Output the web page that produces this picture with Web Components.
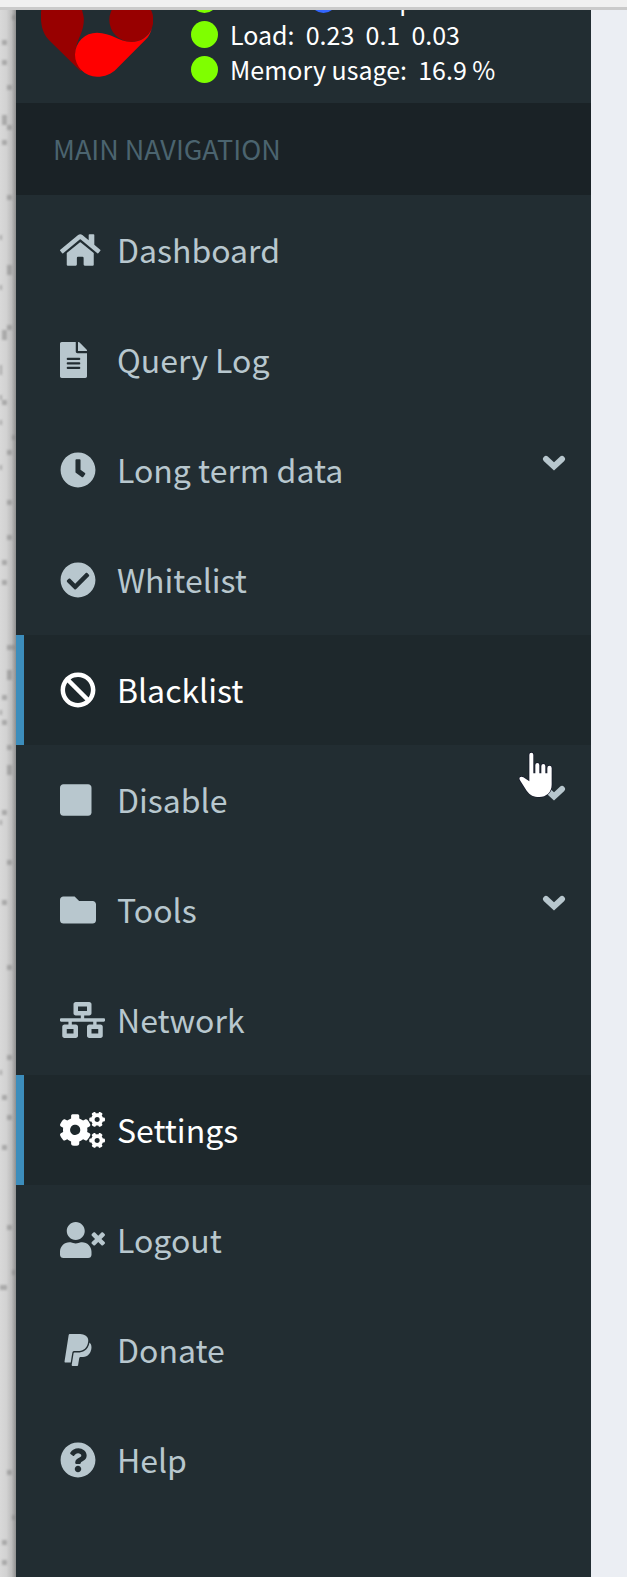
<!DOCTYPE html>
<html lang="en">
<head>
<meta charset="utf-8">
<meta name="viewport" content="width=device-width">
<title>Pi-hole navigation</title>
<style>
  html, body { margin: 0; background: #ebeef3; }
  body { font-family: "Noto Sans CJK SC", "Noto Sans CJK JP", sans-serif; }
</style>
</head>
<body>
<app-page>
  <status-panel slot="sidebar"></status-panel>
  <nav-menu slot="sidebar" heading="MAIN NAVIGATION">
    <nav-item icon="home">Dashboard</nav-item>
    <nav-item icon="file">Query Log</nav-item>
    <nav-item icon="clock" expandable>Long term data</nav-item>
    <nav-item icon="check">Whitelist</nav-item>
    <nav-item icon="ban" active>Blacklist</nav-item>
    <nav-item icon="stop" expandable>Disable<hand-pointer slot="overlay"></hand-pointer></nav-item>
    <nav-item icon="folder" expandable>Tools</nav-item>
    <nav-item icon="network">Network</nav-item>
    <nav-item icon="cogs" active>Settings</nav-item>
    <nav-item icon="logout">Logout</nav-item>
    <nav-item icon="paypal">Donate</nav-item>
    <nav-item icon="help">Help</nav-item>
  </nav-menu>
</app-page>

<script>
const define = (name, html, setup) => {
  const template = document.createElement('template');
  template.innerHTML = html;
  customElements.define(name, class extends HTMLElement {
    constructor() {
      super();
      this.attachShadow({ mode: 'open' }).append(template.content.cloneNode(true));
    }
    connectedCallback() { if (setup) setup(this, this.shadowRoot); }
  });
};

// [viewBox, path] for each menu icon; 512 units are 36px.
const ICONS = {
  home: ['0 0 576 512', 'M280.37 148.26L96 300.11V464a16 16 0 0 0 16 16l112.06-.29a16 16 0 0 0 15.92-16V368a16 16 0 0 1 16-16h64a16 16 0 0 1 16 16v95.64a16 16 0 0 0 16 16.05L464 480a16 16 0 0 0 16-16V300L295.67 148.26a12.19 12.19 0 0 0-15.3 0zM571.6 251.47L488 182.56V44.05a12 12 0 0 0-12-12h-56a12 12 0 0 0-12 12v72.61L318.47 43a48 48 0 0 0-61 0L4.34 251.47a12 12 0 0 0-1.6 16.9l25.5 31A12 12 0 0 0 45.15 301l235.22-193.74a12.19 12.19 0 0 1 15.3 0L530.9 301a12 12 0 0 0 16.9-1.6l25.5-31a12 12 0 0 0-1.7-16.93z'],
  file: ['0 0 384 512', 'M224 136V0H24C10.7 0 0 10.7 0 24v464c0 13.3 10.7 24 24 24h336c13.3 0 24-10.7 24-24V160H248c-13.2 0-24-10.8-24-24zm64 236c0 6.6-5.4 12-12 12H108c-6.6 0-12-5.4-12-12v-8c0-6.6 5.4-12 12-12h168c6.6 0 12 5.4 12 12v8zm0-64c0 6.6-5.4 12-12 12H108c-6.6 0-12-5.4-12-12v-8c0-6.6 5.4-12 12-12h168c6.6 0 12 5.4 12 12v8zm0-72v8c0 6.6-5.4 12-12 12H108c-6.6 0-12-5.4-12-12v-8c0-6.6 5.4-12 12-12h168c6.6 0 12 5.4 12 12zm96-114.1v6.1H256V0h6.1c6.4 0 12.5 2.5 17 7l97.9 98c4.5 4.5 7 10.6 7 16.9z'],
  clock: ['0 0 512 512', 'M256 8C119 8 8 119 8 256s111 248 248 248 248-111 248-248S393 8 256 8zm57.1 350.1L224.9 294c-3.1-2.3-4.9-5.9-4.9-9.7V116c0-6.6 5.4-12 12-12h48c6.6 0 12 5.4 12 12v137.7l63.5 46.2c5.4 3.9 6.5 11.4 2.6 16.8l-28.2 38.8c-3.9 5.3-11.4 6.5-16.8 2.6z'],
  check: ['0 0 512 512', 'M504 256c0 136.967-111.033 248-248 248S8 392.967 8 256 119.033 8 256 8s248 111.033 248 248zM227.314 387.314l184-184c6.248-6.248 6.248-16.379 0-22.627l-22.627-22.627c-6.248-6.249-16.379-6.249-22.628 0L216 308.118l-70.059-70.059c-6.248-6.248-16.379-6.248-22.628 0l-22.627 22.627c-6.248 6.248-6.248 16.379 0 22.627l104 104c6.249 6.249 16.379 6.249 22.628.001z'],
  ban: ['0 0 512 512', 'M256 8C119.034 8 8 119.033 8 256s111.034 248 248 248 248-111.034 248-248S392.967 8 256 8zm130.108 117.892c65.448 65.448 70 165.481 20.677 235.637L150.47 105.216c70.204-49.356 170.226-44.735 235.638 20.676zM125.892 386.108c-65.448-65.448-70-165.481-20.677-235.637L361.53 406.784c-70.203 49.356-170.226 44.736-235.638-20.676z'],
  stop: ['0 0 448 512', 'M400 32H48C21.5 32 0 53.5 0 80v352c0 26.5 21.5 48 48 48h352c26.5 0 48-21.5 48-48V80c0-26.5-21.5-48-48-48z'],
  folder: ['0 0 512 512', 'M464 128H272l-64-64H48C21.49 64 0 85.49 0 112v288c0 26.51 21.49 48 48 48h416c26.51 0 48-21.49 48-48V176c0-26.51-21.49-48-48-48z'],
  network: ['0 0 640 512', 'M640 264v-16c0-8.84-7.16-16-16-16H344v-40h72c17.67 0 32-14.33 32-32V32c0-17.67-14.33-32-32-32H224c-17.67 0-32 14.33-32 32v128c0 17.67 14.33 32 32 32h72v40H16c-8.84 0-16 7.16-16 16v16c0 8.84 7.16 16 16 16h104v40H64c-17.67 0-32 14.33-32 32v128c0 17.67 14.33 32 32 32h160c17.67 0 32-14.33 32-32V352c0-17.67-14.33-32-32-32h-56v-40h304v40h-56c-17.67 0-32 14.33-32 32v128c0 17.67 14.33 32 32 32h160c17.67 0 32-14.33 32-32V352c0-17.67-14.33-32-32-32h-56v-40h104c8.84 0 16-7.16 16-16zM256 128V64h128v64H256zm-64 320H96v-64h96v64zm352 0h-96v-64h96v64z'],
  cogs: ['0 0 640 512', 'M512.1 191l-8.2 14.3c-3 5.3-9.4 7.5-15.1 5.4-11.8-4.4-22.6-10.7-32.1-18.6-4.6-3.8-5.8-10.5-2.8-15.7l8.2-14.3c-6.9-8-12.3-17.3-15.9-27.4h-16.5c-6 0-11.2-4.3-12.2-10.3-2-12-2.1-24.6 0-37.1 1-6 6.2-10.4 12.2-10.4h16.5c3.6-10.1 9-19.4 15.9-27.4l-8.2-14.3c-3-5.2-1.9-11.9 2.8-15.7 9.5-7.9 20.4-14.2 32.1-18.6 5.7-2.1 12.1.1 15.1 5.4l8.2 14.3c10.5-1.9 21.2-1.9 31.7 0L552 6.3c3-5.3 9.4-7.5 15.1-5.4 11.8 4.4 22.6 10.7 32.1 18.6 4.6 3.8 5.8 10.5 2.8 15.7l-8.2 14.3c6.9 8 12.3 17.3 15.9 27.4h16.5c6 0 11.2 4.3 12.2 10.3 2 12 2.1 24.6 0 37.1-1 6-6.2 10.4-12.2 10.4h-16.5c-3.6 10.1-9 19.4-15.9 27.4l8.2 14.3c3 5.2 1.9 11.9-2.8 15.7-9.5 7.9-20.4 14.2-32.1 18.6-5.7 2.1-12.1-.1-15.1-5.4l-8.2-14.3c-10.4 1.9-21.2 1.9-31.7 0zm-10.5-58.8c38.5 29.6 82.4-14.3 52.8-52.8-38.5-29.7-82.4 14.3-52.8 52.8zM386.3 286.1l33.7 16.8c10.1 5.8 14.5 18.1 10.5 29.1-8.9 24.2-26.4 46.4-42.6 65.8-7.4 8.9-20.2 11.1-30.3 5.3l-29.1-16.8c-16 13.7-34.6 24.6-54.9 31.7v33.6c0 11.6-8.3 21.6-19.7 23.6-24.6 4.2-50.4 4.4-75.9 0-11.5-2-20-11.9-20-23.6V418c-20.3-7.2-38.9-18-54.9-31.7L74 403c-10 5.8-22.9 3.6-30.3-5.3-16.2-19.4-33.3-41.6-42.2-65.7-4-10.9.4-23.2 10.5-29.1l33.3-16.8c-3.9-20.9-3.9-42.4 0-63.4L12 205.8c-10.1-5.8-14.6-18.1-10.5-29 8.9-24.2 26-46.4 42.2-65.8 7.4-8.9 20.2-11.1 30.3-5.3l29.1 16.8c16-13.7 34.6-24.6 54.9-31.7V57.1c0-11.5 8.2-21.5 19.6-23.5 24.6-4.2 50.5-4.4 76-.1 11.5 2 20 11.9 20 23.6v33.6c20.3 7.2 38.9 18 54.9 31.7l29.1-16.8c10-5.8 22.9-3.6 30.3 5.3 16.2 19.4 33.2 41.6 42.1 65.8 4 10.9.1 23.2-10 29.1l-33.7 16.8c3.9 21 3.9 42.5 0 63.5zm-117.6 21.1c59.2-77-28.7-164.9-105.7-105.7-59.2 77 28.7 164.9 105.7 105.7zm243.4 182.7l-8.2 14.3c-3 5.3-9.4 7.5-15.1 5.4-11.8-4.4-22.6-10.7-32.1-18.6-4.6-3.8-5.8-10.5-2.8-15.7l8.2-14.3c-6.9-8-12.3-17.3-15.9-27.4h-16.5c-6 0-11.2-4.3-12.2-10.3-2-12-2.1-24.6 0-37.1 1-6 6.2-10.4 12.2-10.4h16.5c3.6-10.1 9-19.4 15.9-27.4l-8.2-14.3c-3-5.2-1.9-11.9 2.8-15.7 9.5-7.9 20.4-14.2 32.1-18.6 5.7-2.1 12.1.1 15.1 5.4l8.2 14.3c10.5-1.9 21.2-1.9 31.7 0l8.2-14.3c3-5.3 9.4-7.5 15.1-5.4 11.8 4.4 22.6 10.7 32.1 18.6 4.6 3.8 5.8 10.5 2.8 15.7l-8.2 14.3c6.9 8 12.3 17.3 15.9 27.4h16.5c6 0 11.2 4.3 12.2 10.3 2 12 2.1 24.6 0 37.1-1 6-6.2 10.4-12.2 10.4h-16.5c-3.6 10.1-9 19.4-15.9 27.4l8.2 14.3c3 5.2 1.9 11.9-2.8 15.7-9.5 7.9-20.4 14.2-32.1 18.6-5.7 2.1-12.1-.1-15.1-5.4l-8.2-14.3c-10.4 1.9-21.2 1.9-31.7 0zM501.6 431c38.5 29.6 82.4-14.3 52.8-52.8-38.5-29.6-82.4 14.3-52.8 52.8z'],
  logout: ['0 0 640 512', 'M589.6 240l45.6-45.6c6.3-6.3 6.3-16.5 0-22.8l-22.8-22.8c-6.3-6.3-16.5-6.3-22.8 0L544 194.4l-45.6-45.6c-6.3-6.3-16.5-6.3-22.8 0l-22.8 22.8c-6.3 6.3-6.3 16.5 0 22.8l45.6 45.6-45.6 45.6c-6.3 6.3-6.3 16.5 0 22.8l22.8 22.8c6.3 6.3 16.5 6.3 22.8 0l45.6-45.6 45.6 45.6c6.3 6.3 16.5 6.3 22.8 0l22.8-22.8c6.3-6.3 6.3-16.5 0-22.8L589.6 240zM224 256c70.7 0 128-57.3 128-128S294.7 0 224 0 96 57.3 96 128s57.3 128 128 128zm89.6 32h-16.7c-22.2 10.2-46.9 16-72.9 16s-50.6-5.8-72.9-16h-16.7C60.2 288 0 348.2 0 422.4V464c0 26.5 21.5 48 48 48h352c26.5 0 48-21.5 48-48v-41.6c0-74.2-60.2-134.4-134.4-134.4z'],
  paypal: ['-64 0 512 512', 'M111.4 295.9c-3.5 19.2-17.4 108.7-21.5 134-.3 1.8-1 2.5-3 2.5H12.3c-7.6 0-13.1-6.6-12.1-13.9L58.8 46.6c1.5-9.6 10.1-16.9 20-16.9 152.3 0 165.1-3.7 204 11.4 60.1 23.3 65.6 79.5 44 140.3-21.5 62.6-72.5 89.5-140.1 90.3-43.4.7-69.5-7-75.3 24.2zM357.1 152c-1.8-1.3-2.5-1.8-3 1.3-2 11.4-5.1 22.5-8.8 33.6-39.9 113.8-150.5 103.9-204.5 103.9-6.1 0-10.1 3.3-10.9 9.4-22.6 140.4-27.1 169.7-27.1 169.7-1 7.1 3.5 12.9 10.6 12.9h63.5c8.6 0 15.7-6.3 17.4-14.9.7-5.4-1.1 6.1 14.4-91.3 4.6-22 14.3-19.7 29.3-19.7 71 0 126.4-28.8 142.9-112.3 6.5-34.8 4.6-71.4-23.8-92.6z'],
  help: ['0 0 512 512', 'M504 256c0 136.997-111.043 248-248 248S8 392.997 8 256C8 119.083 119.043 8 256 8s248 111.083 248 248zM262.655 90c-54.497 0-89.255 22.957-116.549 63.758-3.536 5.286-2.353 12.415 2.715 16.258l34.699 26.31c5.205 3.947 12.621 3.008 16.665-2.122 17.864-22.658 30.113-35.797 57.303-35.797 20.429 0 45.698 13.148 45.698 32.958 0 14.976-12.363 22.667-32.534 33.976C247.128 238.528 216 254.941 216 296v4c0 6.627 5.373 12 12 12h56c6.627 0 12-5.373 12-12v-1.333c0-28.462 83.186-29.647 83.186-106.667 0-58.002-60.165-102-116.531-102zM256 338c-25.365 0-46 20.635-46 46 0 25.364 20.635 46 46 46s46-20.636 46-46c0-25.364-20.635-46-46-46z']
};

define('hand-pointer', `
  <style>
    :host { display: block; width: 37px; height: 50px; }
    svg { display: block; }
  </style>
  <svg width="37" height="50" viewBox="0 0 111 150" aria-hidden="true">
    <path fill="#fff" stroke="#15182a" stroke-width="4" paint-order="stroke" stroke-linejoin="round"
      d="M37 94V14a6 6 0 0 1 12 0V70H55V45a6 6 0 0 1 12 0V70H73V48a6 6 0 0 1 12 0V70H91V54a6 6 0 0 1 13 0V104C104 126 88 141 67 141C50 141 39 136 29 122L9 91C4 83 11 77 19 82Z"/>
  </svg>`);

// Rough paper edge to the left of the sidebar: [x, y, width, height] of each fleck.
const FLECKS = [[12,15],[2,40],[2,60],[7,85],[2,115,5,10],[7,125],[2,140],[7,195],[-3,235],[7,265,5,10],[-3,285],[7,325],[2,330,5,10],[-3,365,5,10],[-3,395],[2,400],[-3,420],[12,435],[7,450],[-3,465],[7,500],[7,535],[2,560],[2,580],[7,645,9],[7,670,5,10],[2,695],[-3,710],[2,720],[7,745],[7,765,5,10],[2,810],[-3,820],[7,860],[2,900],[7,965],[7,1055],[-3,1070],[2,1095],[7,1115],[2,1145],[7,1225],[12,1270],[-3,1285,10],[7,1470],[12,1515],[2,1540],[2,1560]];

define('paper-edge', `
  <style>
    :host { display: block; position: relative; overflow: hidden;
      background: linear-gradient(to right, #d9d9d9 0, #d2d2d2 40%, #bdbdbd 72%, #8f8f8f 100%); }
    svg { position: absolute; left: 0; top: 0; width: 100%; height: 100%; filter: blur(1px); }
  </style>
  <svg aria-hidden="true" fill="#878787" fill-opacity=".55"></svg>`,
(host, root) => {
  root.querySelector('svg').innerHTML = FLECKS
    .map(([x, y, w = 5, h = 5]) => `<rect x="${x}" y="${y - 10}" width="${w}" height="${h}"/>`).join('');
});

define('app-page', `
  <style>
    :host { display: flex; flex-direction: column; min-height: 100vh; }
    header { height: 7px; background: #f0f0f0; border-bottom: 3px solid #cacaca; }
    .body { flex: 1; display: grid; grid-template-columns: 16px 1fr 36px; }
    aside { background: #222d32; min-width: 0; }
    main { background: #ebeef3; }
  </style>
  <header></header>
  <div class="body">
    <paper-edge></paper-edge>
    <aside><slot name="sidebar"></slot></aside>
    <main></main>
  </div>`);

define('status-panel', `
  <style>
    :host { display: flex; height: 93px; overflow: hidden; color: #fff; font-size: 25px; line-height: 35px; }
    .logo { flex: none; width: 112px; height: 67px; margin: 0 38px 0 25px; }
    .rows { margin-top: -28px; flex: 1; }
    .row, .cell { display: flex; align-items: center; white-space: pre; }
    .cell { gap: 12px; }
    .first { width: 119px; }
    .dot { width: 27px; height: 27px; border-radius: 50%; background: #7fff00; flex: none; }
    .cold { background: #3366ff; }
  </style>
  <svg class="logo" viewBox="123 30 336 201" aria-hidden="true">
    <path fill="#980000" d="M124 30C121 50 123 66 126 82C130 97 136 109 146 119L242 214L262 160L226 158C227 140 234 121 241 106C250 84 254 62 250 46L246 30Z"/>
    <circle cx="394" cy="60" r="66" fill="#980000"/>
    <path fill="#f00" d="M291 98C333 98 357 125 394 126A66 66 0 0 0 456 84C451 100 446 110 438 118L350 206C334 222 314 230 291 230A66 66 0 0 1 291 98Z"/>
  </svg>
  <div class="rows">
    <div class="row"><span class="cell first"><i class="dot"></i></span><span class="cell"><i class="dot cold"></i><span>Temp:</span></span></div>
    <div class="cell"><i class="dot"></i><span>Load:  0.23  0.1  0.03</span></div>
    <div class="cell"><i class="dot"></i><span>Memory usage:  16.9 %</span></div>
  </div>`);

define('nav-menu', `
  <style>
    :host { display: block; }
    h2 { margin: 0; padding-left: 37px; background: #1a2226; color: #4b646f;
      font-size: 27px; font-weight: 400; line-height: 92px; }
  </style>
  <nav><h2></h2><slot></slot></nav>`,
(host, root) => { root.querySelector('h2').textContent = host.getAttribute('heading'); });

define('nav-item', `
  <style>
    :host { display: block; position: relative; color: #b8c7ce; }
    a { display: flex; align-items: center; height: 110px; padding: 0 25px 0 36px; border-left: 8px solid transparent;
      color: inherit; text-decoration: none; font-size: 32px; line-height: 48px; }
    :host([active]) { color: #fff; }
    :host([active]) a { background: #1e282c; border-left-color: #3c8dbc; }
    .icon { flex: none; width: 57px; }
    .icon svg { display: block; height: 36px; }
    .label { flex: 1; padding-bottom: 2px; }
    .chevron { display: none; width: 24px; height: 16px; margin-bottom: 14px; }
    :host([expandable]) .chevron { display: block; }
    ::slotted(hand-pointer) { position: absolute; right: 37px; top: 5px; }
  </style>
  <a href="#">
    <span class="icon"><svg fill="currentColor" aria-hidden="true"><path/></svg></span>
    <span class="label"><slot></slot></span>
    <svg class="chevron" viewBox="0 0 24 16" fill="none" stroke="currentColor" stroke-width="6" stroke-linecap="round" aria-hidden="true"><path d="M4 4L12 11.5L20 4"/></svg>
  </a>
  <slot name="overlay"></slot>`,
(host, root) => {
  const [box, path] = ICONS[host.getAttribute('icon')];
  const svg = root.querySelector('.icon svg');
  svg.setAttribute('viewBox', box);
  svg.setAttribute('width', box.split(' ')[2] * 36 / 512);
  svg.firstElementChild.setAttribute('d', path);
});
</script>
</body>
</html>
